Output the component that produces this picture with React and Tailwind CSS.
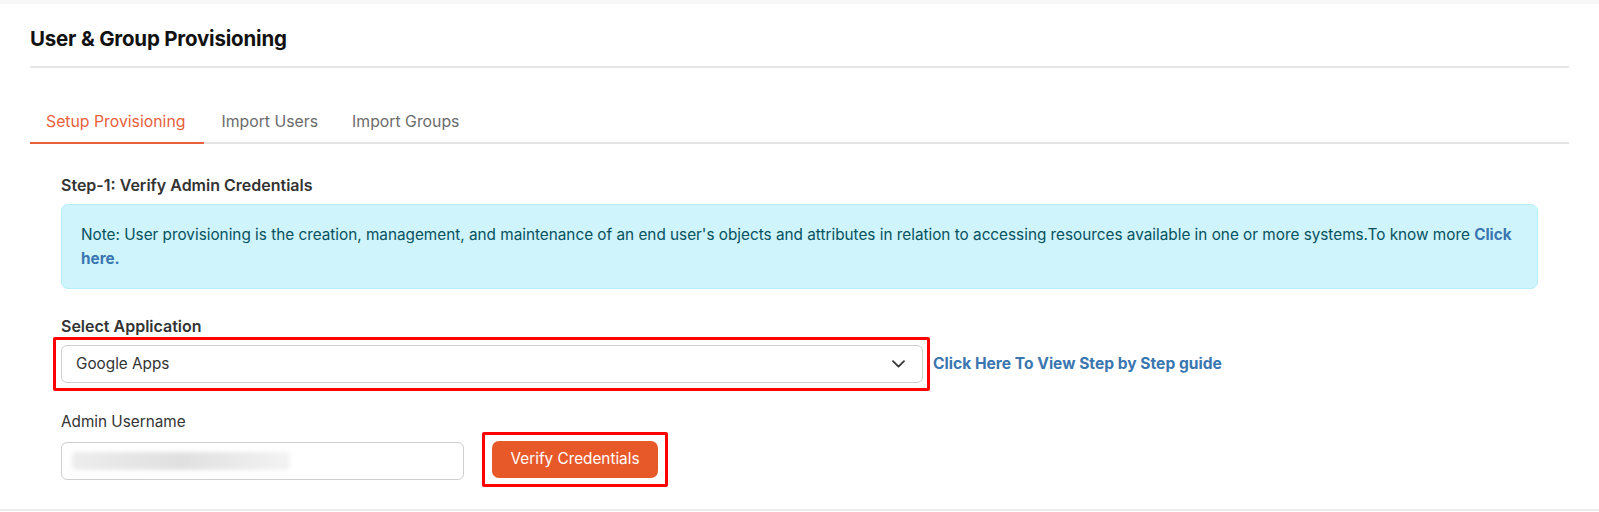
import React from "react";

const font = { fontFamily: "Inter, 'Noto Sans', 'Liberation Sans', sans-serif" };

export default function App() {
  return (
    <div className="w-[1599px] h-[512px] bg-white overflow-hidden" style={font}>
      <div className="h-[4px] bg-[#f7f7f7]" />
      <div className="px-[30px] border-b-2 border-[#ececec] pb-[22px]">
        <h1 className="pt-[21px] text-[20.5px] leading-[28px] font-bold text-[#111] tracking-[-0.2px]">
          User &amp; Group Provisioning
        </h1>
        <div className="mt-[13px] h-[2px] bg-[#e6e6e6]" />

        <div className="mt-[42px] flex border-b-2 border-[#e3e3e3]">
          <div className="pl-[16px] pr-[19px] pb-[8px] text-[15.8px] leading-[24px] text-[#e8603c] border-b-2 border-[#e8603c] -mb-[2px]">
            Setup Provisioning
          </div>
          <div className="px-[17px] pb-[8px] text-[15.8px] leading-[24px] text-[#6b6b6b]">
            Import Users
          </div>
          <div className="px-[17px] pb-[8px] text-[15.8px] leading-[24px] text-[#6b6b6b]">
            Import Groups
          </div>
        </div>

        <div className="px-[31px]">
          <div className="mt-[31px] text-[16px] leading-[20px] font-semibold text-[#333]">
            Step-1: Verify Admin Credentials
          </div>

          <div className="mt-[9px] rounded-[7px] border border-[#b6effb] bg-[#cff4fc] px-[19px] pt-[18px] pb-[17px] text-[15.3px] leading-[24px] text-[#055160]">
            Note: User provisioning is the creation, management, and maintenance of an end user's objects and attributes in relation to accessing resources available in one or more systems.To know more{" "}
            <span className="font-bold text-[#3a76b0]">Click here.</span>
          </div>

          <div className="mt-[27px] text-[16px] leading-[20px] font-semibold text-[#333]">
            Select Application
          </div>

          <div className="mt-[1px] flex items-center">
            <div className="-ml-[8px] w-[877px] border-[3px] border-[#ff0000] rounded-[2px] p-[5px] pr-[4px]">
              <div className="h-[38px] rounded-[6px] border border-[#cfcfcf] bg-white flex items-center justify-between pl-[14px] pr-[17px]">
                <span className="text-[15.3px] text-[#333]">Google Apps</span>
                <svg width="13" height="8" viewBox="0 0 13 8" fill="none">
                  <path d="M1 1.2l5.5 5.5 5.5-5.5" stroke="#333" strokeWidth="1.7" strokeLinecap="round" strokeLinejoin="round" />
                </svg>
              </div>
            </div>
            <a className="ml-[3px] text-[15.6px] font-bold text-[#3a76b0]">
              Click Here To View Step by Step guide
            </a>
          </div>

          <div className="mt-[21px] text-[15.3px] leading-[20px] text-[#333]">Admin Username</div>

          <div className="flex items-start">
            <div className="mt-[10px] w-[403px] h-[38px] rounded-[6px] border border-[#cfcfcf] bg-white flex items-center px-[10px]">
              <div className="w-[218px] h-[18px] rounded-[4px] bg-gradient-to-r from-[#ededed] via-[#e0e0e0] to-[#f3f3f3] blur-[2px]" />
            </div>
            <div className="ml-[18px] border-[3px] border-[#ff0000] rounded-[2px] px-[7px] py-[6px]">
              <button className="w-[166px] h-[37px] rounded-[7px] bg-[#e8592a] text-white text-[15.3px]">
                Verify Credentials
              </button>
            </div>
          </div>
        </div>
      </div>
    </div>
  );
}
